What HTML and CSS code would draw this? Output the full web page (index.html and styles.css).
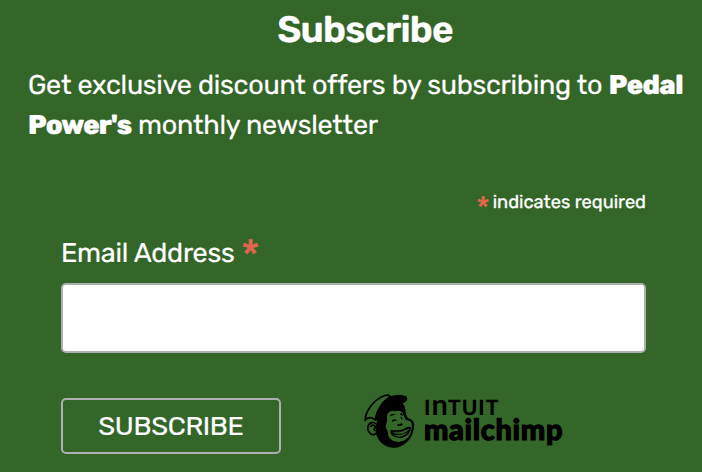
FILE: index.html
```
<!DOCTYPE html>
<html lang="en">
<head>
<meta charset="utf-8">
<title>Subscribe</title>
<link rel="stylesheet" href="styles.css">
</head>
<body>
<main class="signup">
  <h1 class="title">Subscribe</h1>
  <p class="intro"><span class="intro-lead">Get exclusive discount offers by subscribing to</span> <strong class="brand">Pedal</strong><br><strong class="brand brand-end">Power's</strong> <span class="intro-tail">monthly newsletter</span></p>
  <form class="form">
    <p class="hint"><span class="star">*</span> indicates required</p>
    <label class="label" for="email"><span class="label-text">Email Address</span><span class="star">*</span></label>
    <input class="field" id="email" type="email">
    <div class="actions">
      <button class="submit" type="button"><span>SUBSCRIBE</span></button>
      <div class="logo">
        <svg class="mascot" viewBox="42 24 153 168" aria-hidden="true">
          <path d="M81 111C79 87 88 72 104 61C121 49 134 52 146 45C157 50 166 62 167 80C168 92 172 100 182 103C193 109 195 121 190 137C184 163 163 186 134 188C107 189 86 172 78 146Z"/>
          <path class="skin" d="M111 101C109 83 120 76 135 79C146 75 158 77 160 89L166 102C167 108 181 105 184 113C188 121 185 143 175 157C160 173 138 175 123 163C110 153 117 139 109 131C103 122 113 112 111 101Z"/>
          <path d="M120 91Q128 83 136 89Q129 89 122 94ZM150 86Q158 82 159 94Q155 89 151 90ZM125 107Q134 99 142 107Q134 105 129 110ZM151 95Q157 94 158 104Q153 103 151 95ZM141 121Q144 113 149 119Q156 111 158 119Q155 123 150 122Q145 124 141 121Z"/>
          <path d="M122 134Q149 140 167 128Q178 123 183 127Q181 151 157 158Q138 162 125 150Q119 143 122 134Z"/>
          <path class="lip" d="M128 141Q151 145 178 131Q174 139 161 144Q141 149 128 141Z"/>
          <path class="lip" d="M131 150Q151 153 172 143Q165 152 151 154Q138 155 131 150Z"/>
          <path class="outline skin" d="M46 105C45 84 68 44 103 32C112 29 119 31 121 36C98 49 79 76 77 105Q59 91 46 105Z"/>
          <path d="M75 101C80 73 99 46 120 33C142 28 174 27 172 42C169 58 139 58 112 69C96 76 86 88 81 104Z"/>
          <path class="outline skin" d="M81 119C73 108 57 112 54 124C51 137 60 149 70 149Q77 149 81 142Z"/>
          <path class="outline" d="M62 126Q66 116 74 123Q78 129 72 133L76 139"/>
        </svg>
        <div class="wordmark"><span class="intuit">I<span class="arch">n</span>TUIT</span><span class="mailchimp">mailchimp</span></div>
      </div>
    </div>
  </form>
</main>
</body>
</html>
```
FILE: styles.css
```
* { box-sizing: border-box; }
body {
  margin: 0;
  background: #336628;
  color: #fff;
  font-family: Rubik, Roboto, sans-serif;
  text-rendering: geometricPrecision;
}
.signup { height: 472px; padding: 8px 0 0 28px; overflow: hidden; }
.title { margin: 0; text-align: center; font-size: 37px; line-height: 44px; font-weight: 600; letter-spacing: -0.8px; -webkit-text-stroke: 0.2px; }
.intro { margin: 13px 0 0; font-size: 27px; line-height: 40px; white-space: nowrap; -webkit-text-stroke: 0.2px; }
.intro-lead { letter-spacing: -0.27px; }
.intro-tail { letter-spacing: -0.25px; }
.brand { font-weight: 800; letter-spacing: -0.6px; }
.brand-end { letter-spacing: -0.8px; }
.form { width: 585px; margin: 46px 0 0 33px; }
.hint { height: 22px; margin: 0; text-align: right; font-size: 18.3px; line-height: 22px; -webkit-text-stroke: 0.3px; }
.star { color: #e0664c; font-family: Roboto, sans-serif; font-weight: 900; -webkit-text-stroke: 0.6px; }
.hint .star { font-size: 23px; line-height: 12px; vertical-align: -5px; }
.label { display: flex; gap: 8px; height: 32px; margin-top: 24px; font-size: 27px; line-height: 32px; letter-spacing: -0.27px; -webkit-text-stroke: 0.2px; }
.label .star { font-size: 33px; }
.field { display: block; width: 100%; height: 70px; margin-top: 14px; padding: 0 12px; border: 2px solid #abb0b2; border-radius: 5px; background: #fff; font: inherit; outline: 0; }
.actions { display: flex; align-items: flex-start; margin-top: 45px; }
.submit { width: 220px; height: 56px; padding: 0; border: 2px solid #abb0b2; border-radius: 5px; background: transparent; color: #fff; font-family: inherit; font-size: 27px; letter-spacing: -0.3px; -webkit-text-stroke: 0.2px; }
.logo { display: flex; gap: 9px; margin: -5px 0 0 83px; color: #000; }
.mascot { width: 51px; height: 56px; }
.skin { fill: #336628; }
.lip { fill: #336628; stroke: #336628; }
.outline { stroke: #000; stroke-width: 5; fill: none; }
.outline.skin { fill: #336628; }
.wordmark { display: flex; flex-direction: column; padding-top: 7px; }
.intuit { font: 900 21px/16px Lato, sans-serif; letter-spacing: 1px; }
.arch { font-size: 29px; font-weight: 700; line-height: 0; letter-spacing: 0.3px; }
.mailchimp { margin-top: 3px; font: 900 29px/22px Lato, sans-serif; letter-spacing: 0.65px; -webkit-text-stroke: 1.1px #000; }
```
